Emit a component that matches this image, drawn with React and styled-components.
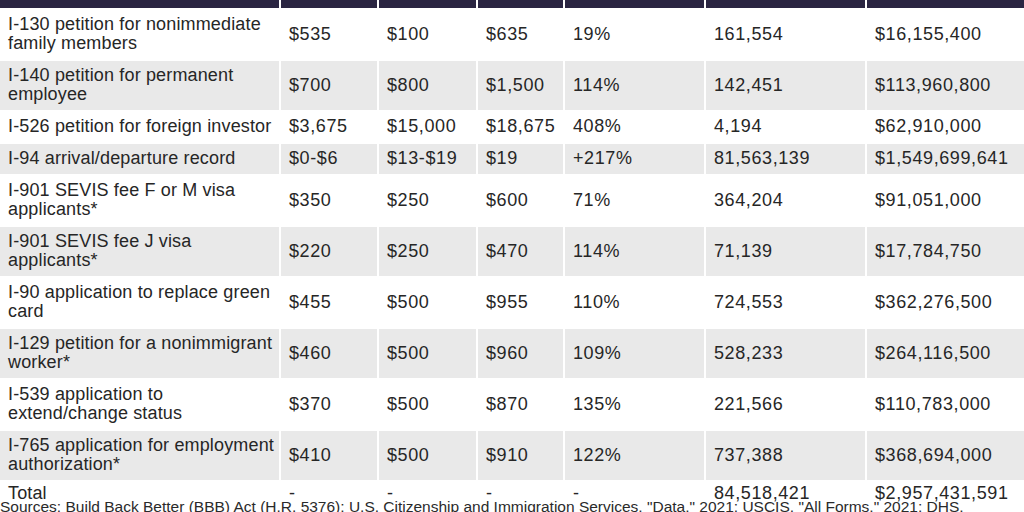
import React from 'react'
import styled, { createGlobalStyle } from 'styled-components'

const GlobalStyle = createGlobalStyle`
  html, body {
    margin: 0;
    padding: 0;
    background: #ffffff;
  }
  body {
    font-family: 'Liberation Sans', Arial, sans-serif;
    color: #262626;
    overflow: hidden;
  }
`

const COLUMNS = '279px 96px 97px 85px 139px 159px 1fr'

const Table = styled.div`
  display: flex;
  flex-direction: column;
  gap: 2px;
  width: 1024px;
`

const Row = styled.div`
  display: grid;
  grid-template-columns: ${COLUMNS};
  column-gap: 2px;
  height: ${props => (props.$total ? '17px' : 'auto')};
`

const HeadCell = styled.div`
  height: 8px;
  background: #2a2542;
`

const Cell = styled.div`
  display: flex;
  align-items: ${props => (props.$top ? 'flex-start' : 'center')};
  padding: ${props => (props.$top ? '2px 8px 0' : '5px 8px 6px')};
  background: ${props => (props.$shaded ? '#e9e9e9' : '#ffffff')};
  font-size: 18px;
  line-height: 19px;
  letter-spacing: ${props => (props.$num ? '0.6px' : '0.15px')};
  white-space: nowrap;
`

const Label = styled.span`
  display: block;
`

const Sources = styled.p`
  margin: 0;
  font-size: 15.5px;
  line-height: 16px;
  color: #2a2a2a;
  white-space: nowrap;
`

const rows = [
  [['I-130 petition for nonimmediate', 'family members'], '$535', '$100', '$635', '19%', '161,554', '$16,155,400'],
  [['I-140 petition for permanent', 'employee'], '$700', '$800', '$1,500', '114%', '142,451', '$113,960,800'],
  [['I-526 petition for foreign investor'], '$3,675', '$15,000', '$18,675', '408%', '4,194', '$62,910,000'],
  [['I-94 arrival/departure record'], '$0-$6', '$13-$19', '$19', '+217%', '81,563,139', '$1,549,699,641'],
  [['I-901 SEVIS fee F or M visa', 'applicants*'], '$350', '$250', '$600', '71%', '364,204', '$91,051,000'],
  [['I-901 SEVIS fee J visa', 'applicants*'], '$220', '$250', '$470', '114%', '71,139', '$17,784,750'],
  [['I-90 application to replace green', 'card'], '$455', '$500', '$955', '110%', '724,553', '$362,276,500'],
  [['I-129 petition for a nonimmigrant', 'worker*'], '$460', '$500', '$960', '109%', '528,233', '$264,116,500'],
  [['I-539 application to', 'extend/change status'], '$370', '$500', '$870', '135%', '221,566', '$110,783,000'],
  [['I-765 application for employment', 'authorization*'], '$410', '$500', '$910', '122%', '737,388', '$368,694,000'],
]

const total = ['Total', '-', '-', '-', '-', '84,518,421', '$2,957,431,591']

const App = () => (
  <>
    <GlobalStyle />
    <Table>
      <Row>
        {total.map((_, i) => (
          <HeadCell key={i} />
        ))}
      </Row>

      {rows.map(([label, ...values], r) => (
        <Row key={label[0]}>
          <Cell $shaded={r % 2 === 1}>
            <div>
              {label.map(line => (
                <Label key={line}>{line}</Label>
              ))}
            </div>
          </Cell>
          {values.map((v, i) => (
            <Cell key={i} $num $shaded={r % 2 === 1}>
              {v}
            </Cell>
          ))}
        </Row>
      ))}

      <Row $total>
        {total.map((v, i) => (
          <Cell key={i} $top $num={i > 0}>
            {v}
          </Cell>
        ))}
      </Row>
    </Table>
    <Sources>
      Sources: Build Back Better (BBB) Act (H.R. 5376); U.S. Citizenship and Immigration Services, "Data," 2021; USCIS, "All Forms," 2021; DHS,
    </Sources>
  </>
)

export default App
